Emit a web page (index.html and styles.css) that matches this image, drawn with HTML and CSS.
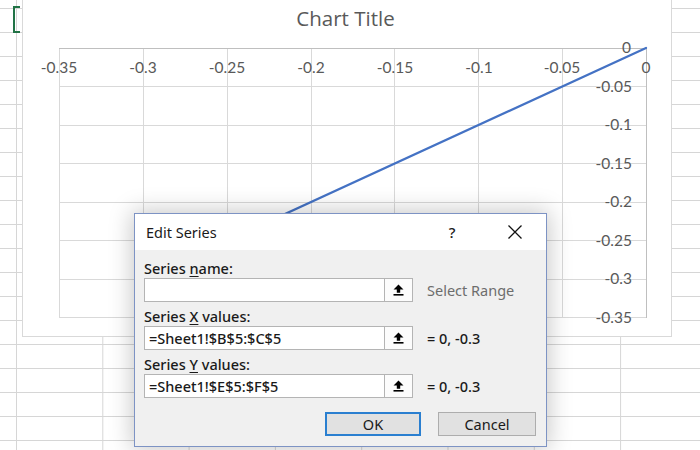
FILE: index.html
```html
<!DOCTYPE html>
<html>
<head>
<meta charset="utf-8">
<link rel="stylesheet" href="styles.css">
</head>
<body>
<div class="sheet">
  <div class="sel-handle"></div>
  <div class="chart">
    <div class="chart-title">Chart Title</div>
    <svg class="plot" width="648" height="300" viewBox="23 36 648 300" xmlns="http://www.w3.org/2000/svg">
      <g stroke="#d9d9d9" stroke-width="1">
        <line x1="59.5" y1="48" x2="59.5" y2="318"/>
        <line x1="143.5" y1="48" x2="143.5" y2="318"/>
        <line x1="227.5" y1="48" x2="227.5" y2="318"/>
        <line x1="311.5" y1="48" x2="311.5" y2="318"/>
        <line x1="394.5" y1="48" x2="394.5" y2="318"/>
        <line x1="478.5" y1="48" x2="478.5" y2="318"/>
        <line x1="562.5" y1="48" x2="562.5" y2="318"/>
        <line x1="59" y1="86.5" x2="646" y2="86.5"/>
        <line x1="59" y1="125.5" x2="646" y2="125.5"/>
        <line x1="59" y1="163.5" x2="646" y2="163.5"/>
        <line x1="59" y1="202.5" x2="646" y2="202.5"/>
        <line x1="59" y1="240.5" x2="646" y2="240.5"/>
        <line x1="59" y1="279.5" x2="646" y2="279.5"/>
        <line x1="59" y1="317.5" x2="646" y2="317.5"/>
      </g>
      <g stroke="#bfbfbf" stroke-width="1">
        <line x1="59" y1="48.5" x2="646" y2="48.5"/>
        <line x1="646.5" y1="48" x2="646.5" y2="318"/>
      </g>
      <g class="xlab" text-anchor="middle">
        <text x="59" y="73">-0.35</text>
        <text x="143" y="73">-0.3</text>
        <text x="227" y="73">-0.25</text>
        <text x="311" y="73">-0.2</text>
        <text x="395" y="73">-0.15</text>
        <text x="479" y="73">-0.1</text>
        <text x="562" y="73">-0.05</text>
        <text x="646" y="73">0</text>
      </g>
      <g class="ylab" text-anchor="end">
        <text x="631" y="53">0</text>
        <text x="632" y="92">-0.05</text>
        <text x="632" y="130">-0.1</text>
        <text x="632" y="169">-0.15</text>
        <text x="632" y="207">-0.2</text>
        <text x="632" y="246">-0.25</text>
        <text x="632" y="284">-0.3</text>
        <text x="632" y="323">-0.35</text>
      </g>
      <line x1="646" y1="48" x2="143" y2="279.4" stroke="#4472c4" stroke-width="2.25" stroke-linecap="round"/>
    </svg>
  </div>

  <div class="dialog">
    <div class="dlg-titlebar">
      <span class="dlg-title">Edit Series</span>
      <span class="dlg-help">?</span>
      <span class="dlg-close">
        <svg width="14" height="14" viewBox="0 0 14 14"><path d="M0.5 0.5 L13.5 13.5 M13.5 0.5 L0.5 13.5" stroke="#111" stroke-width="1.3" fill="none"/></svg>
      </span>
    </div>
    <div class="dlg-body">
      <div class="field">
        <div class="label">Series <u>n</u>ame:</div>
        <div class="row">
          <div class="input"></div>
          <div class="pick"><svg width="11" height="12" viewBox="0 0 11 12"><path d="M5.5 0.5 L10.5 5.5 L7.2 5.5 L7.2 8.8 L3.8 8.8 L3.8 5.5 L0.5 5.5 Z" fill="#000"/><rect x="0.5" y="10" width="10" height="1.6" fill="#000"/></svg></div>
          <span class="note muted">Select Range</span>
        </div>
      </div>
      <div class="field">
        <div class="label">Series <u>X</u> values:</div>
        <div class="row">
          <div class="input">=Sheet1!$B$5:$C$5</div>
          <div class="pick"><svg width="11" height="12" viewBox="0 0 11 12"><path d="M5.5 0.5 L10.5 5.5 L7.2 5.5 L7.2 8.8 L3.8 8.8 L3.8 5.5 L0.5 5.5 Z" fill="#000"/><rect x="0.5" y="10" width="10" height="1.6" fill="#000"/></svg></div>
          <span class="note">= 0, -0.3</span>
        </div>
      </div>
      <div class="field">
        <div class="label">Series <u>Y</u> values:</div>
        <div class="row">
          <div class="input">=Sheet1!$E$5:$F$5</div>
          <div class="pick"><svg width="11" height="12" viewBox="0 0 11 12"><path d="M5.5 0.5 L10.5 5.5 L7.2 5.5 L7.2 8.8 L3.8 8.8 L3.8 5.5 L0.5 5.5 Z" fill="#000"/><rect x="0.5" y="10" width="10" height="1.6" fill="#000"/></svg></div>
          <span class="note">= 0, -0.3</span>
        </div>
      </div>
      <div class="actions">
        <div class="btn btn-ok">OK</div>
        <div class="btn btn-cancel">Cancel</div>
      </div>
    </div>
  </div>
</div>
</body>
</html>
```

FILE: styles.css
```css
html, body {
  margin: 0;
  padding: 0;
}
body {
  width: 700px;
  height: 450px;
  overflow: hidden;
  background: #fff;
}
.sheet {
  position: relative;
  width: 700px;
  height: 450px;
  overflow: hidden;
  background-color: #fff;
  background-image:
    linear-gradient(to bottom, #d6d6d6 1px, transparent 1px),
    linear-gradient(to right, #d6d6d6 1px, transparent 1px);
  background-size: 100% 24px, 86.3px 100%;
  background-position: 0 8px, 16px 0;
}
.sel-handle {
  position: absolute;
  left: 13px;
  top: 6px;
  width: 5px;
  height: 23px;
  border: 2.5px solid #217346;
  border-right: none;
}
.chart {
  position: absolute;
  left: 22px;
  top: -1px;
  width: 648px;
  height: 336px;
  border: 1px solid #d9d9d9;
  background: #fff;
  display: flex;
  flex-direction: column;
}
.chart-title {
  height: 36px;
  line-height: 36px;
  text-align: center;
  font-family: "Open Sans", "Noto Sans", sans-serif;
  font-size: 20.5px;
  color: #595959;
  padding-right: 3px;
}
.plot {
  display: block;
}
.plot text {
  font-family: Lato, "Liberation Sans", sans-serif;
  font-size: 15.5px;
  fill: #595959;
}
.dialog {
  position: absolute;
  left: 134px;
  top: 213px;
  width: 411px;
  height: 232px;
  border: 1px solid #7d93c4;
  background: #f0f0f0;
  box-shadow: 0 0 22px 2px rgba(0, 0, 0, 0.22);
  font-family: "Noto Sans", "Open Sans", sans-serif;
  color: #1a1a1a;
  display: flex;
  flex-direction: column;
}
.dlg-titlebar {
  height: 36px;
  background: #fff;
  display: flex;
  align-items: center;
  padding-left: 11px;
}
.dlg-title {
  font-size: 14.5px;
  flex: 1;
}
.dlg-help {
  font-size: 15px;
  font-weight: 500;
  width: 20px;
  text-align: center;
  margin-right: 46px;
}
.dlg-close {
  display: flex;
  margin-right: 24px;
}
.dlg-body {
  padding: 8px 10px 0 9px;
  display: flex;
  flex-direction: column;
  gap: 4px;
}
.field {
  display: flex;
  flex-direction: column;
}
.label {
  height: 20px;
  line-height: 20px;
  font-size: 14.5px;
  font-weight: 500;
}
.label u {
  text-decoration-thickness: 1px;
  text-underline-offset: 2px;
}
.row {
  display: flex;
  align-items: center;
  height: 24px;
}
.input {
  box-sizing: border-box;
  width: 240px;
  height: 24px;
  background: #fff;
  border: 1px solid #b4b4b4;
  border-right: none;
  font-size: 14.5px;
  font-weight: 500;
  line-height: 22px;
  padding-left: 4px;
}
.pick {
  box-sizing: border-box;
  width: 29px;
  height: 24px;
  border: 1px solid #b4b4b4;
  background: #fcfcfc;
  display: flex;
  align-items: center;
  justify-content: center;
}
.note {
  margin-left: 14px;
  font-size: 14.5px;
  font-weight: 500;
}
.note.muted {
  font-weight: 400;
  color: #6d6d6d;
}
.actions {
  display: flex;
  justify-content: flex-end;
  gap: 17px;
  margin-top: 10px;
}
.btn {
  box-sizing: border-box;
  height: 24px;
  background: #e1e1e1;
  border: 1px solid #adadad;
  font-size: 14.5px;
  display: flex;
  align-items: center;
  justify-content: center;
}
.btn-ok {
  width: 96px;
  border: 2px solid #2a7fd0;
}
.btn-cancel {
  width: 98px;
}
```
